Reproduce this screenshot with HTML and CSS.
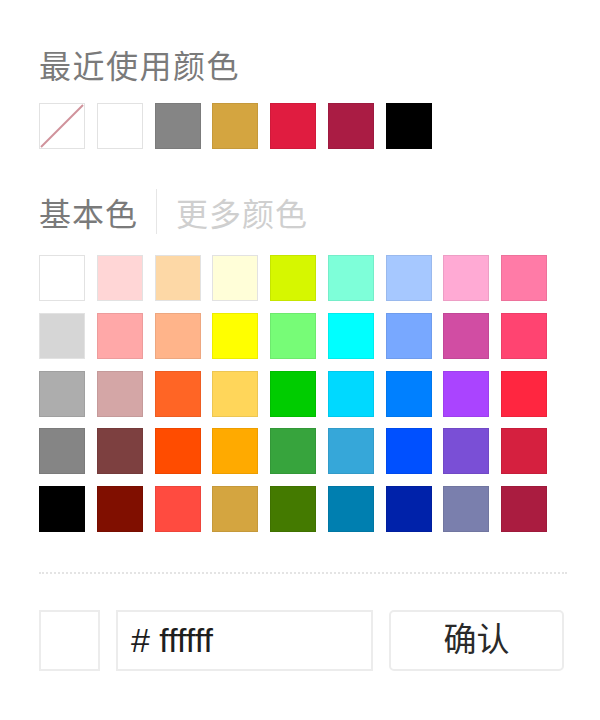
FILE: index.html
```html
<!DOCTYPE html>
<html lang="zh">
<head>
<meta charset="utf-8">
<title>颜色选择</title>
<link rel="stylesheet" href="styles.css">
</head>
<body>
<div class="picker">
  <div class="title">最近使用颜色</div>
  <div class="recent">
    <div class="sw sw-light sw-none">
      <svg viewBox="0 0 46 46" width="46" height="46"><line x1="2" y1="44" x2="44" y2="2" stroke="#d0929b" stroke-width="2"/></svg>
    </div>
    <div class="sw sw-light" style="background:#ffffff"></div>
    <div class="sw" style="background:#858585"></div>
    <div class="sw" style="background:#d4a540"></div>
    <div class="sw" style="background:#e01c40"></div>
    <div class="sw" style="background:#aa1c44"></div>
    <div class="sw" style="background:#000000"></div>
  </div>
  <div class="tabs">
    <span class="tab tab-active">基本色</span>
    <span class="tab-sep"></span>
    <span class="tab tab-more">更多颜色</span>
  </div>
  <div class="grid">
    <div class="sw sw-light" style="background:#ffffff"></div>
    <div class="sw sw-light" style="background:#ffd6d6"></div>
    <div class="sw sw-light" style="background:#fdd8a6"></div>
    <div class="sw sw-light" style="background:#fffed8"></div>
    <div class="sw" style="background:#d6f700"></div>
    <div class="sw" style="background:#7effd9"></div>
    <div class="sw" style="background:#a6c8ff"></div>
    <div class="sw" style="background:#ffaad4"></div>
    <div class="sw" style="background:#ff7ba7"></div>

    <div class="sw sw-light" style="background:#d6d6d6"></div>
    <div class="sw" style="background:#ffa8a8"></div>
    <div class="sw" style="background:#ffb48a"></div>
    <div class="sw" style="background:#ffff00"></div>
    <div class="sw" style="background:#77fc77"></div>
    <div class="sw" style="background:#00ffff"></div>
    <div class="sw" style="background:#78a8ff"></div>
    <div class="sw" style="background:#d14da3"></div>
    <div class="sw" style="background:#ff4471"></div>

    <div class="sw" style="background:#adadad"></div>
    <div class="sw" style="background:#d4a6a6"></div>
    <div class="sw" style="background:#ff6525"></div>
    <div class="sw" style="background:#ffd65a"></div>
    <div class="sw" style="background:#00cc00"></div>
    <div class="sw" style="background:#00d9ff"></div>
    <div class="sw" style="background:#0080ff"></div>
    <div class="sw" style="background:#aa44ff"></div>
    <div class="sw" style="background:#ff2640"></div>

    <div class="sw" style="background:#858585"></div>
    <div class="sw" style="background:#7d4040"></div>
    <div class="sw" style="background:#ff4c00"></div>
    <div class="sw" style="background:#ffaa00"></div>
    <div class="sw" style="background:#37a43d"></div>
    <div class="sw" style="background:#36a7d9"></div>
    <div class="sw" style="background:#0050ff"></div>
    <div class="sw" style="background:#7a4fd6"></div>
    <div class="sw" style="background:#d5203f"></div>

    <div class="sw" style="background:#000000"></div>
    <div class="sw" style="background:#800f00"></div>
    <div class="sw" style="background:#ff4b40"></div>
    <div class="sw" style="background:#d4a540"></div>
    <div class="sw" style="background:#447a00"></div>
    <div class="sw" style="background:#007fb0"></div>
    <div class="sw" style="background:#0022aa"></div>
    <div class="sw" style="background:#7a7fad"></div>
    <div class="sw" style="background:#aa1c40"></div>
  </div>
  <div class="divider"></div>
  <div class="bottom">
    <div class="preview"></div>
    <div class="hex"># ffffff</div>
    <button class="confirm">确认</button>
  </div>
</div>
</body>
</html>
```

FILE: styles.css
```css
html, body {
  margin: 0;
  padding: 0;
  background: #ffffff;
}

body {
  font-family: "Noto Sans CJK SC", "Noto Sans", sans-serif;
}

.picker {
  display: flex;
  flex-direction: column;
  width: 528px;
  padding: 48px 0 0 39px;
}

.title {
  font-size: 32px;
  line-height: 32px;
  letter-spacing: 1.5px;
  color: #7a7a7a;
}

.recent {
  display: flex;
  gap: 11.75px;
  margin-top: 23px;
}

.sw {
  width: 46px;
  height: 46px;
  box-sizing: border-box;
  border: 1px solid rgba(0, 0, 0, 0.07);
}

.sw-light {
  border-color: #e2e2e2;
}

.sw-none {
  background: #ffffff;
  position: relative;
}

.sw-none svg {
  position: absolute;
  left: -1px;
  top: -1px;
}

.tabs {
  display: flex;
  align-items: center;
  height: 45px;
  margin-top: 40px;
}

.tab {
  font-size: 32px;
  line-height: 32px;
  letter-spacing: 1px;
}

.tab-active {
  color: #7a7a7a;
}

.tab-more {
  color: #cfcfcf;
}

.tab-sep {
  width: 1px;
  height: 45px;
  background: #e6e6e6;
  margin: 0 19px 0 18px;
}

.grid {
  display: grid;
  grid-template-columns: repeat(9, 46px);
  gap: 11.75px;
  margin-top: 21px;
}

.divider {
  margin-top: 40px;
  border-top: 2px dotted #e4e4e4;
}

.bottom {
  display: flex;
  gap: 16px;
  margin-top: 36px;
  height: 61px;
}

.preview {
  width: 61px;
  height: 61px;
  box-sizing: border-box;
  border: 2px solid #ececec;
  background: #ffffff;
}

.hex {
  width: 257px;
  box-sizing: border-box;
  border: 2px solid #ececec;
  display: flex;
  align-items: center;
  padding-left: 13px;
  font-family: "Liberation Sans", Arial, sans-serif;
  font-size: 34px;
  color: #1e1e1e;
}

.confirm {
  width: 175px;
  box-sizing: border-box;
  border: 2px solid #ececec;
  border-radius: 5px;
  background: #ffffff;
  font-family: "Noto Sans CJK SC", sans-serif;
  font-size: 33px;
  line-height: 33px;
  color: #2a2a2a;
  padding: 0 0 6px 0;
}
```
